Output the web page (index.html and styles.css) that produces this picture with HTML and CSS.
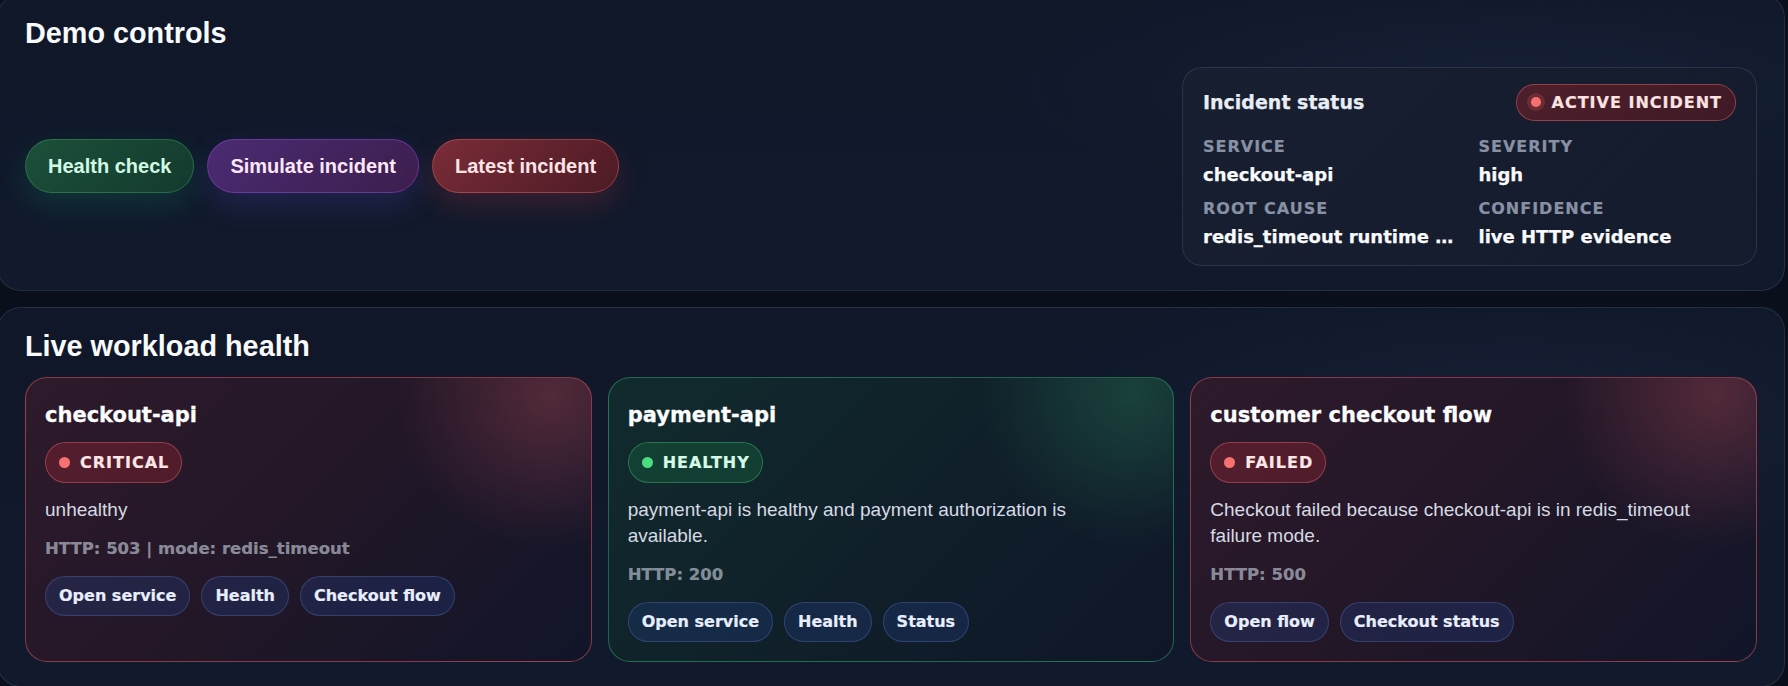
FILE: index.html
```html
<!DOCTYPE html>
<html lang="en">
<head>
<meta charset="utf-8">
<title>Incident demo</title>
<link rel="stylesheet" href="styles.css">
</head>
<body>
<main class="page">
  <section class="panel">
    <h2 class="panel-title">Demo controls</h2>
    <div class="controls-row">
      <div class="actions">
        <button class="action action-health" type="button">Health check</button>
        <button class="action action-simulate" type="button">Simulate incident</button>
        <button class="action action-latest" type="button">Latest incident</button>
      </div>
      <aside class="incident">
        <div class="incident-head">
          <h3 class="incident-title">Incident status</h3>
          <span class="badge badge-active"><span class="dot"></span>ACTIVE INCIDENT</span>
        </div>
        <dl class="incident-grid">
          <div class="field"><dt>SERVICE</dt><dd>checkout-api</dd></div>
          <div class="field"><dt>SEVERITY</dt><dd>high</dd></div>
          <div class="field"><dt>ROOT CAUSE</dt><dd>redis_timeout runtime failure</dd></div>
          <div class="field"><dt>CONFIDENCE</dt><dd>live HTTP evidence</dd></div>
        </dl>
      </aside>
    </div>
  </section>

  <section class="panel">
    <h2 class="panel-title">Live workload health</h2>
    <div class="workloads">
      <article class="workload workload-bad">
        <h3 class="workload-name">checkout-api</h3>
        <span class="badge badge-bad"><span class="dot"></span>CRITICAL</span>
        <p class="workload-text">unhealthy</p>
        <p class="workload-meta">HTTP: 503 | mode: redis_timeout</p>
        <div class="links">
          <a class="link" href="#">Open service</a>
          <a class="link" href="#">Health</a>
          <a class="link" href="#">Checkout flow</a>
        </div>
      </article>
      <article class="workload workload-ok">
        <h3 class="workload-name">payment-api</h3>
        <span class="badge badge-ok"><span class="dot"></span>HEALTHY</span>
        <p class="workload-text">payment-api is healthy and payment authorization is available.</p>
        <p class="workload-meta">HTTP: 200</p>
        <div class="links">
          <a class="link" href="#">Open service</a>
          <a class="link" href="#">Health</a>
          <a class="link" href="#">Status</a>
        </div>
      </article>
      <article class="workload workload-bad">
        <h3 class="workload-name">customer checkout flow</h3>
        <span class="badge badge-bad"><span class="dot"></span>FAILED</span>
        <p class="workload-text">Checkout failed because checkout-api is in redis_timeout failure mode.</p>
        <p class="workload-meta">HTTP: 500</p>
        <div class="links">
          <a class="link" href="#">Open flow</a>
          <a class="link" href="#">Checkout status</a>
        </div>
      </article>
    </div>
  </section>
</main>
</body>
</html>
```

FILE: styles.css
```css
* {
  box-sizing: border-box;
}

html,
body {
  margin: 0;
  background: #0a0f1c;
  color: #f1f5f9;
  font-family: "Liberation Sans", Arial, sans-serif;
  overflow: hidden;
}

.page {
  display: flex;
  flex-direction: column;
  gap: 16px;
  margin: -6px 3px 0 -3px;
}

/* ---------- panels ---------- */

.panel {
  border: 1px solid rgba(148, 163, 184, 0.16);
  border-radius: 24px;
  padding: 23px 27px 24px 27px;
  background:
    radial-gradient(ellipse 40% 60% at 85% 30%, rgba(30, 41, 66, 0.45), transparent 70%),
    linear-gradient(180deg, #0f1729 0%, #111a2c 100%);
}

.panel-title {
  margin: 0;
  font-size: 28.8px;
  line-height: 1.1;
  font-weight: 700;
  color: #f8fafc;
}

/* ---------- demo controls ---------- */

.controls-row {
  display: flex;
  align-items: center;
  justify-content: space-between;
  margin-top: 17px;
}

.actions {
  display: flex;
  gap: 13px;
}

.action {
  font-family: "Liberation Sans", Arial, sans-serif;
  font-size: 20px;
  line-height: 24px;
  font-weight: 700;
  padding: 14px 22px;
  border-radius: 999px;
  border: 1px solid;
  cursor: pointer;
}

.action-health {
  color: #d1fae5;
  background: linear-gradient(135deg, #1c5039 0%, #143a2e 100%);
  border-color: rgba(74, 222, 128, 0.28);
  box-shadow: 0 12px 30px rgba(16, 185, 129, 0.16);
}

.action-simulate {
  color: #fbe7f6;
  background: linear-gradient(135deg, #4a2b72 0%, #3d1e4e 100%);
  border-color: rgba(168, 85, 247, 0.38);
  box-shadow: 0 12px 30px rgba(99, 82, 220, 0.2);
}

.action-latest {
  color: #fde4e6;
  background: linear-gradient(135deg, #7a2c37 0%, #4c1b25 100%);
  border-color: rgba(248, 113, 113, 0.38);
  box-shadow: 0 12px 30px rgba(220, 60, 70, 0.2);
}

/* ---------- incident card ---------- */

.incident {
  width: 575px;
  padding: 16px 20px;
  border-radius: 20px;
  border: 1px solid rgba(148, 163, 184, 0.17);
  background: linear-gradient(135deg, #171f31 0%, #141b2d 100%);
  font-family: "DejaVu Sans", sans-serif;
}

.incident-head {
  display: flex;
  align-items: center;
  justify-content: space-between;
}

.incident-title {
  margin: 0;
  font-size: 19px;
  line-height: 24px;
  font-weight: 700;
  color: #e8ecf3;
  -webkit-text-stroke: 0.25px currentColor;
}

.incident-grid {
  display: grid;
  grid-template-columns: 1fr 1fr;
  column-gap: 18px;
  row-gap: 12px;
  margin: 16px 0 0;
}

.field {
  min-width: 0;
}

.field dt {
  font-size: 16px;
  line-height: 20px;
  font-weight: 700;
  letter-spacing: 1px;
  color: #8891a3;
  -webkit-text-stroke: 0.2px currentColor;
}

.field dd {
  margin: 6px 0 0;
  font-size: 18px;
  line-height: 24px;
  font-weight: 700;
  color: #f8fafc;
  white-space: nowrap;
  overflow: hidden;
  text-overflow: ellipsis;
  -webkit-text-stroke: 0.25px currentColor;
}

/* ---------- badges ---------- */

.badge {
  display: inline-flex;
  align-items: center;
  gap: 10px;
  align-self: flex-start;
  border-radius: 999px;
  border: 1px solid;
  font-family: "DejaVu Sans", sans-serif;
  font-size: 16px;
  line-height: 19px;
  font-weight: 700;
  letter-spacing: 1px;
  padding: 10px 12px 10px 13px;
  -webkit-text-stroke: 0.2px currentColor;
}

.dot {
  width: 11px;
  height: 11px;
  border-radius: 50%;
  flex: none;
}

.badge-active {
  padding: 8px 13px 8px 14px;
  gap: 11px;
  color: #fde2e2;
  background: linear-gradient(135deg, #4e1f2a 0%, #3e1a26 100%);
  border-color: rgba(248, 113, 113, 0.42);
}

.badge-active .dot {
  width: 10px;
  height: 10px;
  background: #f87171;
  box-shadow: 0 0 0 4px rgba(248, 113, 113, 0.18);
}

.badge-bad {
  color: #fde6e6;
  background: rgba(185, 40, 55, 0.28);
  border-color: rgba(248, 113, 113, 0.4);
}

.badge-bad .dot {
  background: #f87171;
}

.badge-ok {
  color: #d7fbe6;
  background: rgba(22, 110, 65, 0.35);
  border-color: rgba(74, 222, 128, 0.35);
}

.badge-ok .dot {
  background: #4ade80;
}

/* ---------- workload cards ---------- */

.workloads {
  display: grid;
  grid-template-columns: repeat(3, 1fr);
  gap: 16px;
  margin-top: 15px;
}

.workload {
  display: flex;
  flex-direction: column;
  padding: 25px 26px 19px 19px;
  border-radius: 22px;
  border: 1px solid;
}

.workload-bad {
  border-color: rgba(239, 90, 100, 0.5);
  background:
    radial-gradient(circle at 93% 6%, rgba(190, 80, 95, 0.33), transparent 26%),
    linear-gradient(135deg, #2e1a2b 0%, #221727 50%, #111529 100%);
}

.workload-ok {
  border-color: rgba(60, 190, 120, 0.45);
  background:
    radial-gradient(circle at 93% 6%, rgba(45, 140, 95, 0.33), transparent 26%),
    linear-gradient(135deg, #112b2d 0%, #10202a 50%, #0f1628 100%);
}

.workload-name {
  margin: 0;
  font-family: "DejaVu Sans", sans-serif;
  font-size: 21px;
  line-height: 24px;
  font-weight: 700;
  color: #fbfcfe;
  -webkit-text-stroke: 0.3px currentColor;
}

.workload .badge {
  margin-top: 15px;
}

.workload-text {
  margin: 14px 0 0;
  font-size: 19px;
  line-height: 25.6px;
  color: #d6dae4;
}

.workload-meta {
  margin: 16px 0 0;
  font-family: "DejaVu Sans", sans-serif;
  font-size: 16.5px;
  line-height: 20px;
  font-weight: 700;
  color: rgba(190, 196, 210, 0.68);
  -webkit-text-stroke: 0.2px currentColor;
}

.links {
  display: flex;
  gap: 11px;
  margin-top: 17px;
}

.link {
  font-family: "DejaVu Sans", sans-serif;
  font-size: 16px;
  line-height: 20px;
  font-weight: 700;
  color: #e8eefc;
  text-decoration: none;
  padding: 9px 13px;
  border-radius: 999px;
  border: 1px solid rgba(96, 125, 200, 0.32);
  background: rgba(35, 62, 130, 0.32);
  -webkit-text-stroke: 0.2px currentColor;
}
```
